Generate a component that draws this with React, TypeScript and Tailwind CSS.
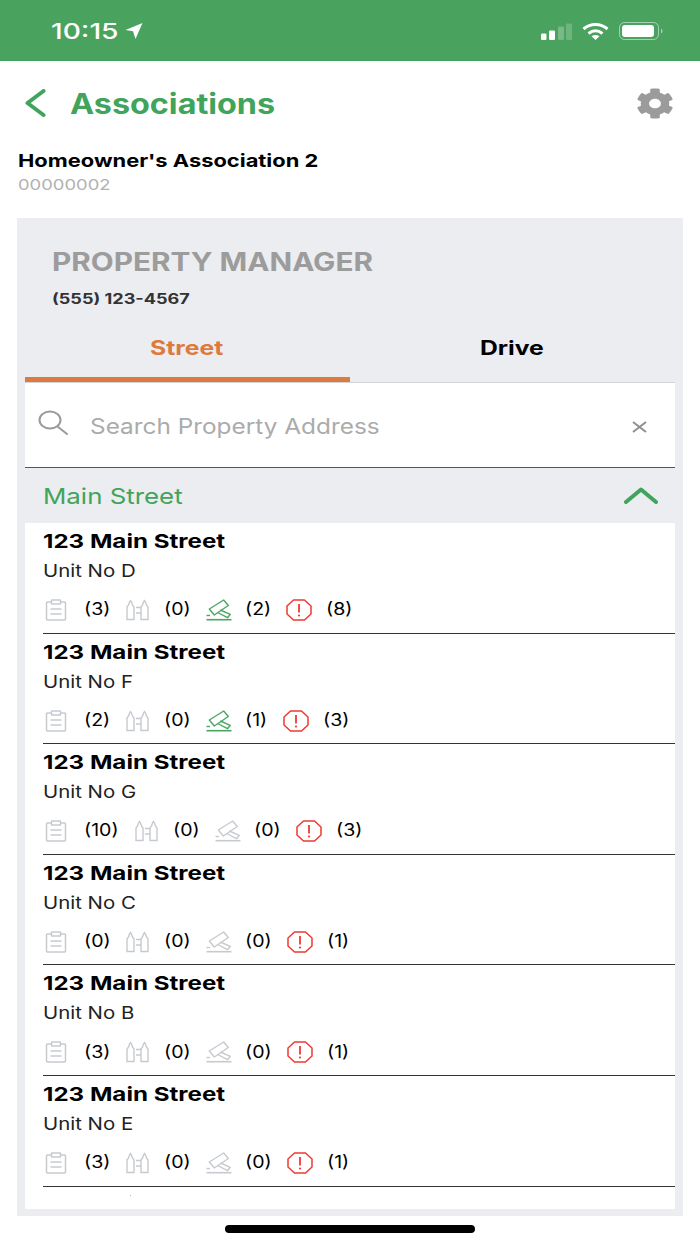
import { FaCog } from "react-icons/fa";

type Unit = {
  name: string;
  counts: [string, string, string, string];
  gavelOn?: boolean;
  gaps: [string, string, string];
};

const units: Unit[] = [
  { name: "Unit No D", counts: ["(3)", "(0)", "(2)", "(8)"], gavelOn: true, gaps: ["w-[40px]", "w-[41px]", "w-[40px]"] },
  { name: "Unit No F", counts: ["(2)", "(0)", "(1)", "(3)"], gavelOn: true, gaps: ["w-[40px]", "w-[41px]", "w-[37px]"] },
  { name: "Unit No G", counts: ["(10)", "(0)", "(0)", "(3)"], gaps: ["w-[49px]", "w-[41px]", "w-[41px]"] },
  { name: "Unit No C", counts: ["(0)", "(0)", "(0)", "(1)"], gaps: ["w-[40px]", "w-[41px]", "w-[41px]"] },
  { name: "Unit No B", counts: ["(3)", "(0)", "(0)", "(1)"], gaps: ["w-[40px]", "w-[41px]", "w-[41px]"] },
  { name: "Unit No E", counts: ["(3)", "(0)", "(0)", "(1)"], gaps: ["w-[40px]", "w-[41px]", "w-[41px]"] },
];

function ClipboardIcon() {
  return (
    <svg width="22" height="22" viewBox="0 0 22 22" fill="none" stroke="#c6cacf" strokeWidth="1.5">
      <path d="M6.5 3H2.5a1 1 0 0 0-1 1v16a1 1 0 0 0 1 1h17a1 1 0 0 0 1-1V4a1 1 0 0 0-1-1h-4" />
      <rect x="6.5" y="1" width="9" height="4" rx="0.5" />
      <path d="M5.5 10h11M5.500 15h11" />
    </svg>
  );
}

function BottlesIcon() {
  return (
    <svg width="24" height="22" viewBox="0 0 24 22" fill="none" stroke="#c6cacf" strokeWidth="1.4" className="ml-[1px]">
      <path d="M1 20.500V8l1.500-2Q3.500 2.500 4.500 1.500 5.500 2.500 6.500 6L8 8v12.500z" />
      <path d="M15 20.500V8l1.500-2q1-3.500 2-4.500 1 1 2 4.500L22 8v12.500z" />
      <path d="M10 8.500h5M10 14h5" />
    </svg>
  );
}

function GavelIcon({ on }: { on?: boolean }) {
  const c = on ? "#4aa763" : "#c6cacf";
  return (
    <svg width="26" height="22" viewBox="0 0 26 22" fill="none" stroke={c} strokeWidth="1.4" strokeLinejoin="round">
      <path d="M3.300 10 17.700 1l4.600 5.500L8.300 16z" />
      <path d="M14.300 11 24.300 15.300 21.500 18.700 11.700 13.500" />
      <path d="M0.500 20.700h25" strokeWidth="1.6" />
      <path d="M0.500 16.500h3.500" />
    </svg>
  );
}

function AlertIcon() {
  return (
    <svg width="26" height="22" viewBox="0 0 26 22" fill="none" stroke="#ee3a32" strokeWidth="1.5">
      <path d="M7.500 1h11L25 7v8l-6.500 6h-11L1 15V7z" strokeLinejoin="round" />
      <path d="M13 5v8.500" strokeWidth="1.8" />
      <circle cx="13" cy="16.500" r="1.1" fill="#ee3a32" stroke="none" />
    </svg>
  );
}

function UnitRow({ unit }: { unit: Unit }) {
  return (
    <div className="ml-[18px] h-[110.6px] border-b-[1.5px] border-[#333] pt-[7px] text-black">
      <p className="origin-left scale-x-[1.27] text-[19px] leading-[24px] font-bold">123 Main Street</p>
      <p className="mt-[7px] origin-left scale-x-[1.2] text-[17px] leading-[20px] text-[#222]">{unit.name}</p>
      <div className="mt-[17px] flex h-[24px] items-center text-[17px]">
        <span className="ml-[2px] flex w-[40px] shrink-0"><ClipboardIcon /></span>
        <span className={`${unit.gaps[0]} shrink-0 origin-left -translate-x-px scale-x-[1.15]`}>{unit.counts[0]}</span>
        <span className="flex w-[40px] shrink-0"><BottlesIcon /></span>
        <span className={`${unit.gaps[1]} shrink-0 origin-left -translate-x-px scale-x-[1.15]`}>{unit.counts[1]}</span>
        <span className="flex w-[40px] shrink-0"><GavelIcon on={unit.gavelOn} /></span>
        <span className={`${unit.gaps[2]} shrink-0 origin-left -translate-x-px scale-x-[1.15]`}>{unit.counts[2]}</span>
        <span className="flex w-[41px] shrink-0"><AlertIcon /></span>
        <span className="origin-left -translate-x-px scale-x-[1.15]">{unit.counts[3]}</span>
      </div>
    </div>
  );
}

export default function App() {
  return (
    <div className="flex h-[1244px] w-[700px] flex-col overflow-hidden bg-white font-['Inter','Liberation_Sans',sans-serif]">
      <div className="flex h-[61px] shrink-0 items-start justify-between border-b border-[#3fa35a] bg-[#4aa25f] pt-[18px] pl-[51px] pr-[37px] text-white">
        <div className="flex items-center">
          <span className="w-[74px] origin-left scale-x-[1.28] text-[22px] leading-[26px] font-medium">10:15</span>
          <svg width="18" height="16" viewBox="0 0 18 16" fill="white"><path d="M17.500 0 0.500 7l7.500 1.200L10.500 16z" /></svg>
        </div>
        <div className="flex items-center gap-[10px] pt-[4px]">
          <svg width="31" height="17" viewBox="0 0 31 17">
            <rect x="0" y="10.500" width="5.500" height="6.500" rx="1.200" fill="white" />
            <rect x="8" y="7.500" width="6" height="9.500" rx="1.200" fill="white" />
            <rect x="17" y="3.500" width="6" height="13.500" rx="1.200" fill="#ffffff" opacity="0.25" />
            <rect x="25" y="0.500" width="6" height="16.500" rx="1.200" fill="#ffffff" opacity="0.2" />
          </svg>
          <svg width="27" height="17" viewBox="0 0 27 17" fill="none" stroke="white" strokeWidth="3">
            <path d="M1.500 6c7-6 17-6 24 0" />
            <path d="M6.500 10.500c4.500-3.500 9.500-3.500 14 0" />
            <path d="M13.500 17 9.500 13.200c2.500-1.500 5.500-1.500 8 0z" fill="white" stroke="none" />
          </svg>
          <svg width="44" height="18" viewBox="0 0 44 18" fill="none">
            <rect x="0.500" y="0.500" width="39" height="17" rx="5" stroke="white" opacity="0.5" />
            <rect x="3" y="3" width="32" height="12" rx="3" fill="white" />
            <path d="M42 6.500v5c1-.4 1.500-1.400 1.500-2.500S43 6.900 42 6.500" fill="white" opacity="0.5" />
          </svg>
        </div>
      </div>

      <div className="flex h-[84px] shrink-0 items-center justify-between pl-[25px] pr-[26px]">
        <div className="flex items-center">
          <svg width="21" height="28" viewBox="0 0 21 28" fill="none" stroke="#41a45c" strokeWidth="4" strokeLinecap="round" strokeLinejoin="round">
            <path d="M18.500 2 2.500 14l16 12" />
          </svg>
          <h1 className="ml-[24px] mt-[1px] origin-left scale-x-[1.155] text-[28px] font-bold text-[#41a45c]">Associations</h1>
        </div>
        <FaCog preserveAspectRatio="none" className="h-[31px] w-[38px] text-[#9b9b9b]" />
      </div>

      <div className="ml-[18px] mt-[4px] shrink-0">
        <p className="origin-left scale-x-[1.216] text-[18px] leading-[24px] font-bold text-black">Homeowner's Association 2</p>
        <p className="mt-[2px] origin-left scale-x-[1.227] text-[15px] leading-[20px] text-[#b1b1b1]">00000002</p>
      </div>

      <div className="mx-[17px] mt-[23px] flex min-h-0 flex-1 flex-col overflow-hidden bg-[#ecedf0] px-[8px] pb-[7px]">
        <div className="shrink-0 pl-[27px] pt-[28px]">
          <p className="origin-left scale-x-[1.19] text-[25px] leading-[32px] font-bold text-[#9c9c9c]">PROPERTY MANAGER</p>
          <p className="mt-[12px] origin-left scale-x-[1.29] text-[14px] leading-[18px] font-bold text-[#333]">(555) 123-4567</p>
        </div>
        <div className="mt-[25px] flex h-[50px] shrink-0 border-b border-[#d2d3d6]">
          <div className="flex h-[49px] w-1/2 justify-center border-b-[5px] border-[#dd7a3d] pt-[1px] text-[20px] leading-[28px] font-bold text-[#dd7a3d]">
            <span className="-translate-x-px scale-x-[1.235]">Street</span>
          </div>
          <div className="flex h-[49px] w-1/2 justify-center pt-[1px] text-[20px] leading-[28px] font-bold text-black">
            <span className="-translate-x-px scale-x-[1.235]">Drive</span>
          </div>
        </div>
        <div className="flex h-[85px] shrink-0 items-center border-b-[1.5px] border-[#555] bg-white pl-[13px] pr-[28px]">
          <svg width="30" height="25" viewBox="0 0 30 25" fill="none" stroke="#9a9a9a" strokeWidth="2" className="-mt-[6px]">
            <ellipse cx="12" cy="10" rx="10.500" ry="8.500" />
            <path d="M19.500 16.500 29 24" strokeLinecap="round" />
          </svg>
          <span className="ml-[22px] flex-1 origin-left scale-x-[1.16] pt-[3px] text-[21px] text-[#ababab]">Search Property Address</span>
          <svg width="15" height="12" viewBox="0 0 15 12" fill="none" stroke="#8f8f8f" strokeWidth="2" className="mt-[3px]">
            <path d="M1 1l13 10M14 1 1 11" />
          </svg>
        </div>
        <div className="flex h-[55px] shrink-0 items-center justify-between pl-[18px] pr-[17px]">
          <span className="origin-left scale-x-[1.175] pt-[1px] text-[22px] text-[#41a45c]">Main Street</span>
          <svg width="34" height="17" viewBox="0 0 34 17" fill="none" stroke="#41a45c" strokeWidth="4" strokeLinecap="round" strokeLinejoin="round">
            <path d="M2 15 17 2.500 32 15" />
          </svg>
        </div>
        <div className="flex-1 overflow-hidden bg-white">
          {units.map((u) => <UnitRow key={u.name} unit={u} />)}
          <div className="ml-[105px] mt-[8px] h-[1px] w-[1px] bg-[#bbbbbb]" />
        </div>
      </div>

      <div className="flex h-[28px] shrink-0 justify-center pt-[9px]">
        <div className="h-[8px] w-[250px] rounded-full bg-black" />
      </div>
    </div>
  );
}
